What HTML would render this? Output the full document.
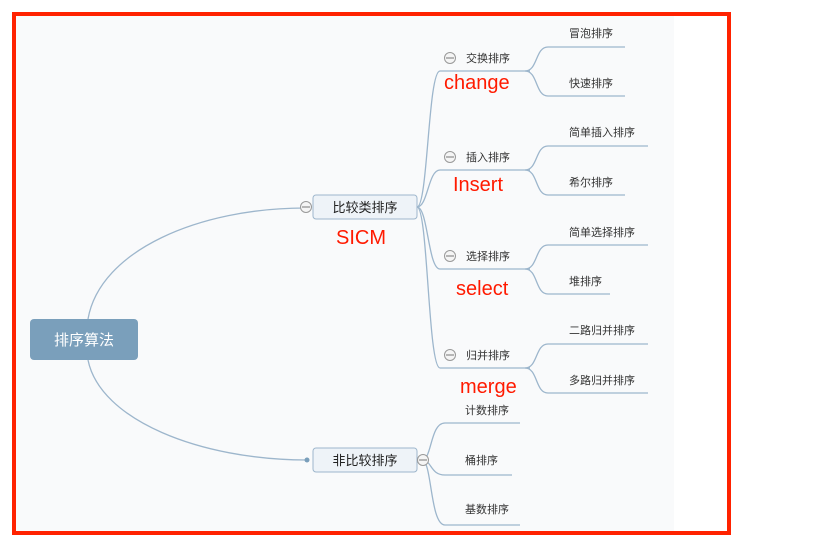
<!DOCTYPE html>
<html><head><meta charset="utf-8"><style>
html,body{margin:0;padding:0;background:#fff;width:836px;height:548px;overflow:hidden}
svg{display:block}
text{font-family:"Liberation Sans","Noto Sans CJK SC",sans-serif}
.t{font-size:11px;fill:#333}
.r{font-size:20px;fill:#ff1a00}
.l{fill:none;stroke:#9db6cc;stroke-width:1.3}
</style></head><body>
<svg width="836" height="548" viewBox="0 0 836 548">
<rect x="14" y="14" width="715" height="519" fill="#fff"/>
<rect x="16" y="16" width="658" height="515" fill="#f9fafb"/>
<rect x="14" y="14" width="715" height="519" fill="none" stroke="#ff2200" stroke-width="4"/>
<!-- main curves -->
<path class="l" d="M88 319 C100 250 200 208 305 208"/>
<path class="l" d="M88 360 C100 420 200 460 307 460"/>
<circle cx="307" cy="460" r="2.5" fill="#7a9fbb"/>
<!-- root -->
<rect x="30" y="319" width="108" height="41" rx="4" fill="#7a9fbb"/>
<text x="84" y="345" text-anchor="middle" font-size="15" fill="#fff">排序算法</text>
<!-- comparison node -->
<path class="l" d="M417 207 C428 207 428 71 440 71 L530 71"/>
<path class="l" d="M417 207 C428 207 428 170 440 170 L530 170"/>
<path class="l" d="M417 207 C428 207 428 269 440 269 L530 269"/>
<path class="l" d="M417 207 C428 207 428 368 440 368 L530 368"/>
<g class="l">
<path d="M525 71 C538 71 535 47 548 47 L625 47 M525 71 C538 71 535 96 548 96 L625 96"/>
<path d="M525 170 C538 170 535 146 548 146 L648 146 M525 170 C538 170 535 195 548 195 L625 195"/>
<path d="M525 269 C538 269 535 245 548 245 L648 245 M525 269 C538 269 535 294 548 294 L610 294"/>
<path d="M525 368 C538 368 535 344 548 344 L648 344 M525 368 C538 368 535 393 548 393 L648 393"/>
</g>
<rect x="313" y="195" width="104" height="24" rx="3" fill="#eef3f8" stroke="#9db6cc"/>
<text x="365" y="212" text-anchor="middle" font-size="13" fill="#222">比较类排序</text>
<circle cx="306" cy="207" r="5.5" fill="#f5f5f5" stroke="#999"/><line x1="302" y1="207" x2="310" y2="207" stroke="#777"/>
<text class="r" x="336" y="244">SICM</text>
<!-- subs -->
<g>
<circle cx="450" cy="58" r="5.5" fill="#f5f5f5" stroke="#999"/><line x1="446" y1="58" x2="454" y2="58" stroke="#777"/>
<text class="t" x="466" y="62">交换排序</text>
<circle cx="450" cy="157" r="5.5" fill="#f5f5f5" stroke="#999"/><line x1="446" y1="157" x2="454" y2="157" stroke="#777"/>
<text class="t" x="466" y="161">插入排序</text>
<circle cx="450" cy="256" r="5.5" fill="#f5f5f5" stroke="#999"/><line x1="446" y1="256" x2="454" y2="256" stroke="#777"/>
<text class="t" x="466" y="260">选择排序</text>
<circle cx="450" cy="355" r="5.5" fill="#f5f5f5" stroke="#999"/><line x1="446" y1="355" x2="454" y2="355" stroke="#777"/>
<text class="t" x="466" y="359">归并排序</text>
</g>
<text class="r" x="444" y="89">change</text>
<text class="r" x="453" y="191">Insert</text>
<text class="r" x="456" y="295">select</text>
<text class="r" x="460" y="393">merge</text>
<g class="t">
<text x="569" y="37">冒泡排序</text>
<text x="569" y="87">快速排序</text>
<text x="569" y="136">简单插入排序</text>
<text x="569" y="186">希尔排序</text>
<text x="569" y="236">简单选择排序</text>
<text x="569" y="285">堆排序</text>
<text x="569" y="334">二路归并排序</text>
<text x="569" y="384">多路归并排序</text>
</g>
<!-- non comparison -->
<path class="l" d="M422 460 C432 460 430 423 445 423 L520 423"/>
<path class="l" d="M422 460 C432 460 430 475 445 475 L512 475"/>
<path class="l" d="M422 460 C432 460 430 525 445 525 L520 525"/>
<rect x="313" y="448" width="104" height="24" rx="3" fill="#eef3f8" stroke="#9db6cc"/>
<text x="365" y="465" text-anchor="middle" font-size="13" fill="#222">非比较排序</text>
<circle cx="423" cy="460" r="5.5" fill="#f5f5f5" stroke="#999"/><line x1="419" y1="460" x2="427" y2="460" stroke="#777"/>
<g class="t">
<text x="465" y="414">计数排序</text>
<text x="465" y="464">桶排序</text>
<text x="465" y="513">基数排序</text>
</g>
</svg>
</body></html>
